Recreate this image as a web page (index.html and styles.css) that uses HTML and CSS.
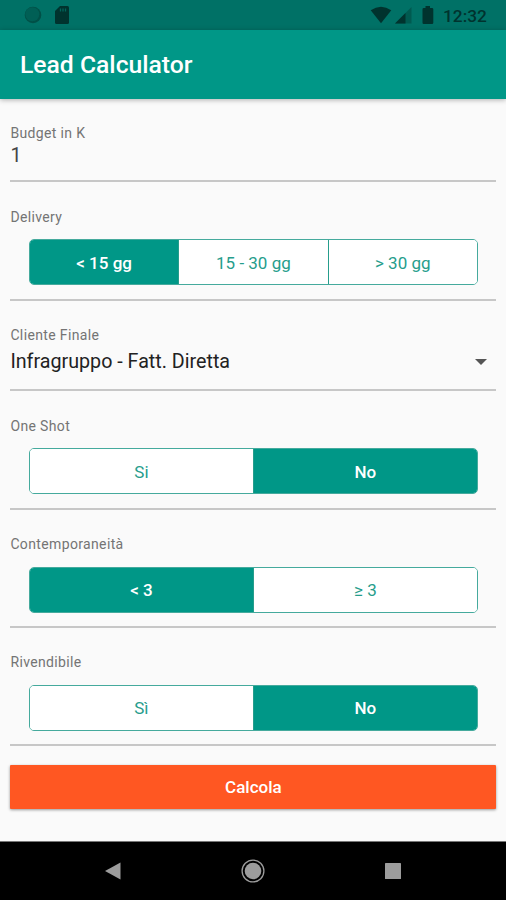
FILE: index.html
```html
<!DOCTYPE html>
<html lang="it">
<head>
<meta charset="utf-8">
<title>Lead Calculator</title>
<link rel="stylesheet" href="styles.css">
</head>
<body>
<div class="status">
  <div class="status-left">
    <svg width="18" height="18" viewBox="0 0 18 18"><circle cx="9" cy="9" r="8.300" fill="#005047"/><circle cx="8.300" cy="8.300" r="7" fill="#005f55"/></svg>
    <svg width="16" height="20" viewBox="0 0 16 20"><path d="M6 1h7.500a1.500 1.500 0 0 1 1.500 1.500v15a1.500 1.500 0 0 1-1.500 1.500H2.500a1.500 1.500 0 0 1-1.500-1.500V6z" fill="#00332e"/><path d="M6.500 3.500v3M9 3.500v3M11.500 3.500v3" stroke="#00665b" stroke-width="1.300"/></svg>
  </div>
  <div class="status-right">
    <svg width="22" height="18" viewBox="0 0 22 18"><path d="M.7 4.300Q11-3 21.300 4.300L11 17.300z" fill="#00332e"/></svg>
    <svg class="signal" width="17" height="17" viewBox="0 0 17 17"><path d="M16.500 0v16.500H0z" fill="#005a50"/><path d="M10.500 6v10.500H0z" fill="#00332e"/></svg>
    <svg class="battery" width="12" height="19" viewBox="0 0 12 19"><path d="M3.500 0h4.500v2h2a1.300 1.300 0 0 1 1.300 1.300v13.400a1.300 1.300 0 0 1-1.300 1.300H1.800a1.300 1.300 0 0 1-1.300-1.300V3.300A1.300 1.300 0 0 1 1.800 2h1.700z" fill="#00332e"/></svg>
    <span class="clock">12:32</span>
  </div>
</div>
<header class="appbar"><h1>Lead Calculator</h1></header>
<main class="form">
  <section class="field field-budget"><label>Budget in K</label><div class="value number">1</div></section>
  <section class="field roomy"><label>Delivery</label>
    <div class="segments"><button class="on">&lt; 15 gg</button><button>15 - 30 gg</button><button>&gt; 30 gg</button></div></section>
  <section class="field field-select"><label>Cliente Finale</label>
    <div class="value select"><span>Infragruppo - Fatt. Diretta</span><svg width="12" height="6" viewBox="0 0 12 6"><path d="M0 0h12L6 6z" fill="#555"/></svg></div></section>
  <section class="field roomy"><label>One Shot</label>
    <div class="segments"><button>Si</button><button class="on">No</button></div></section>
  <section class="field"><label>Contemporaneità</label>
    <div class="segments"><button class="on">&lt; 3</button><button>≥ 3</button></div></section>
  <section class="field"><label>Rivendibile</label>
    <div class="segments"><button>Sì</button><button class="on">No</button></div></section>
  <button class="submit">Calcola</button>
</main>
<nav class="navbar">
  <svg width="16" height="18" viewBox="0 0 16 18"><path d="M15.500.5v17L0 9z" fill="#9c9c9c"/></svg>
  <svg width="24" height="24" viewBox="0 0 24 24"><circle cx="12" cy="12" r="10.900" fill="none" stroke="#9c9c9c" stroke-width="1.300"/><circle cx="12" cy="12" r="8.300" fill="#9c9c9c"/></svg>
  <svg width="16" height="16" viewBox="0 0 16 16"><rect width="16" height="16" rx=".6" fill="#9c9c9c"/></svg>
</nav>
</body>
</html>
```
FILE: styles.css
```css
* { box-sizing: border-box; }
body {
  margin: 0;
  height: 900px;
  display: flex;
  flex-direction: column;
  background: #fafafa;
  font-family: Roboto, sans-serif;
  overflow: hidden;
}
svg { display: block; flex: none; }
.status {
  height: 30px;
  flex: none;
  display: flex;
  justify-content: space-between;
  align-items: center;
  padding: 0 18px 0 24px;
  background: #007166;
}
.status-left, .status-right { display: flex; align-items: center; }
.status-left { gap: 12px; }
.signal { margin-left: 3px; margin-top: 1px; }
.battery { margin-left: 10px; }
.clock {
  width: 45px;
  margin: 2px 0 0 9px;
  font-size: 17.3px;
  font-weight: 500;
  line-height: 20px;
  white-space: nowrap;
  color: #00332e;
}
.appbar {
  height: 69px;
  flex: none;
  display: flex;
  align-items: center;
  padding: 1px 20px 0;
  background: #009787;
  box-shadow: 0 1px 5px rgba(0, 0, 0, .3);
}
h1 {
  margin: 0;
  font-size: 24.7px;
  font-weight: 500;
  line-height: 30px;
  color: #fff;
}
.form { flex: 1; padding: 0 9.6px 0 10.4px; }
.field {
  height: 118px;
  padding-top: 26px;
  border-bottom: 2px solid #c7c7c7;
}
.roomy { height: 119px; padding-top: 27px; }
.field-budget { height: 83px; }
.field-select { height: 90px; }
.field label {
  display: block;
  font-size: 14px;
  line-height: 16px;
  letter-spacing: .36px;
  color: #747474;
}
.value { font-size: 19.7px; line-height: 24px; color: #222; }
.number { margin-top: 3px; color: #444; }
.select {
  margin-top: 7px;
  padding-right: 9px;
  display: flex;
  align-items: center;
  justify-content: space-between;
}
.segments {
  height: 46px;
  margin: 15px 18.5px 0;
  display: flex;
  border: 1px solid #45aa9d;
  border-radius: 5px;
  background: #fff;
  overflow: hidden;
}
.roomy .segments { margin-top: 14px; }
.segments button {
  flex: 1;
  padding: 0;
  border: 0;
  background: #fff;
  font: 400 17px/20px Roboto, sans-serif;
  color: #269d8c;
}
.roomy button { padding-top: 2px; }
.segments button + button { border-left: 1px solid #269d8c; }
.segments .on { background: #009787; color: #fff; font-weight: 500; }
.submit {
  display: block;
  width: 100%;
  height: 44px;
  margin-top: 19px;
  padding: 0;
  border: 0;
  border-radius: 1px;
  background: #ff5722;
  box-shadow: 0 1px 3px rgba(0, 0, 0, .4);
  font: 500 17px/20px Roboto, sans-serif;
  color: #fff;
}
.navbar {
  height: 59px;
  flex: none;
  display: flex;
  align-items: center;
  justify-content: space-between;
  padding: 0 105px;
  border-top: 1px solid #777;
  background: #000;
}
```
